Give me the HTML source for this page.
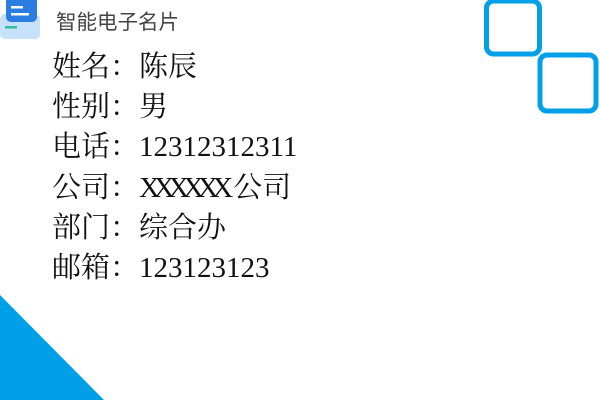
<!DOCTYPE html>
<html><head><meta charset="utf-8"><style>
html,body{margin:0;padding:0;background:#fff;}
body{width:600px;height:400px;position:relative;overflow:hidden;}
.title{position:absolute;left:56px;top:10px;font:20.5px "Liberation Sans","Noto Sans CJK SC",sans-serif;color:#444;line-height:26px;}
.info{position:absolute;left:52px;top:47px;font-family:"Liberation Serif","Noto Serif CJK SC",serif;font-size:29px;color:#111;}
.info div{white-space:nowrap;height:40.2px;line-height:40px;overflow:visible;}
.x{letter-spacing:-6.3px;margin-right:6.3px;}
</style></head><body>
<svg width="600" height="400" style="position:absolute;left:0;top:0">
  <rect x="0" y="14" width="40" height="25" rx="5" fill="#c5e2fa"/>
  <rect x="6" y="-6" width="31" height="28" rx="5" fill="#2a7de1"/>
  <rect x="11" y="6" width="12" height="2.5" fill="#fff"/>
  <rect x="11" y="13" width="18" height="2.5" fill="#fff"/>
  <rect x="5" y="26" width="12" height="2.5" fill="#2fbf9a"/>
  <rect x="486.5" y="1" width="53" height="53" rx="7" fill="none" stroke="#00a0e9" stroke-width="5"/>
  <rect x="540" y="55" width="56" height="56" rx="7" fill="none" stroke="#00a0e9" stroke-width="5"/>
  <polygon points="0,295 104,400 0,400" fill="#00a0e9"/>
</svg>
<div class="title">智能电子名片</div>
<div class="info">
<div>姓名：陈辰</div>
<div>性别：男</div>
<div>电话：12312312311</div>
<div>公司：<span class="x">XXXXXX</span>公司</div>
<div>部门：综合办</div>
<div>邮箱：123123123</div>
</div>
</body></html>
